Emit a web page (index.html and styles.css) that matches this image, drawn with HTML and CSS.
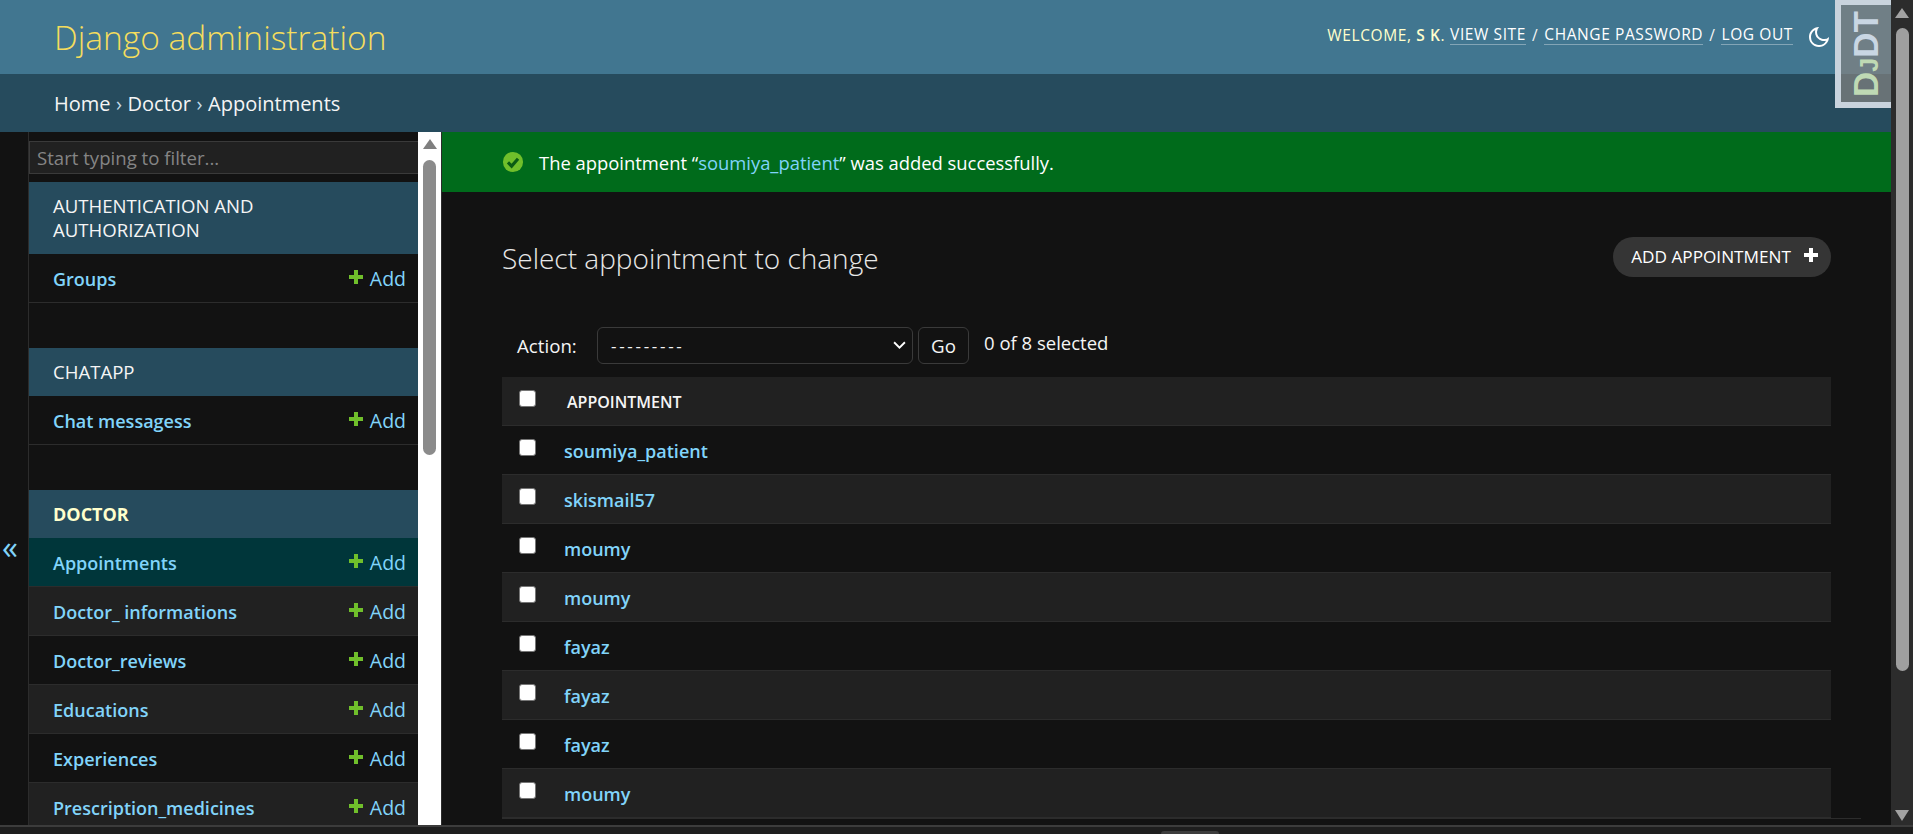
FILE: index.html
```html
<!DOCTYPE html>
<html lang="en">
<head>
<meta charset="utf-8">
<title>Select appointment to change</title>
<link rel="stylesheet" href="styles.css">
</head>
<body>
<div class="window">
  <div class="page">
    <header class="header">
      <h1 class="brand">Django administration</h1>
      <div class="tools">
        <span class="welcome">Welcome, <strong>S K</strong>.</span>
        <a class="tool-link">View site</a><span class="sep">/</span>
        <a class="tool-link">Change password</a><span class="sep">/</span>
        <a class="tool-link">Log out</a>
        <svg class="moon" viewBox="0 0 24 24" width="24" height="24"><path fill="#fff" d="M10 7a7 7 0 0 0 12 4.9v.1c0 5.523-4.477 10-10 10S2 17.523 2 12 6.477 2 12 2h.1A6.98 6.98 0 0 0 10 7zm-6 5a8 8 0 0 0 15.062 3.762A9 9 0 0 1 8.238 4.938 7.999 7.999 0 0 0 4 12z"/></svg>
      </div>
    </header>
    <nav class="crumbs">Home <span class="crumb-sep">›</span> Doctor <span class="crumb-sep">›</span> Appointments</nav>
    <div class="main">
      <div class="toggle">«</div>
      <aside class="sidebar">
        <div class="side-scroll">
          <div class="filter"><input class="filter-input" placeholder="Start typing to filter..."></div>
          <section class="app">
            <div class="caption">Authentication and Authorization</div>
            <div class="model"><a class="model-name">Groups</a><a class="add"><svg class="plus" viewBox="0 0 16 16"><path d="M6 1h4v5h5v4h-5v5H6v-5H1V6h5z"/></svg>Add</a></div>
          </section>
          <section class="app">
            <div class="caption">Chatapp</div>
            <div class="model"><a class="model-name">Chat messagess</a><a class="add"><svg class="plus" viewBox="0 0 16 16"><path d="M6 1h4v5h5v4h-5v5H6v-5H1V6h5z"/></svg>Add</a></div>
          </section>
          <section class="app">
            <div class="caption caption-current">Doctor</div>
            <div class="model model-current"><a class="model-name">Appointments</a><a class="add"><svg class="plus" viewBox="0 0 16 16"><path d="M6 1h4v5h5v4h-5v5H6v-5H1V6h5z"/></svg>Add</a></div>
            <div class="model model-alt"><a class="model-name">Doctor_ informations</a><a class="add"><svg class="plus" viewBox="0 0 16 16"><path d="M6 1h4v5h5v4h-5v5H6v-5H1V6h5z"/></svg>Add</a></div>
            <div class="model"><a class="model-name">Doctor_reviews</a><a class="add"><svg class="plus" viewBox="0 0 16 16"><path d="M6 1h4v5h5v4h-5v5H6v-5H1V6h5z"/></svg>Add</a></div>
            <div class="model model-alt"><a class="model-name">Educations</a><a class="add"><svg class="plus" viewBox="0 0 16 16"><path d="M6 1h4v5h5v4h-5v5H6v-5H1V6h5z"/></svg>Add</a></div>
            <div class="model"><a class="model-name">Experiences</a><a class="add"><svg class="plus" viewBox="0 0 16 16"><path d="M6 1h4v5h5v4h-5v5H6v-5H1V6h5z"/></svg>Add</a></div>
            <div class="model model-alt"><a class="model-name">Prescription_medicines</a><a class="add"><svg class="plus" viewBox="0 0 16 16"><path d="M6 1h4v5h5v4h-5v5H6v-5H1V6h5z"/></svg>Add</a></div>
          </section>
        </div>
        <div class="side-bar">
          <span class="arrow-up arrow-light"></span>
          <span class="side-thumb"></span>
        </div>
      </aside>
      <main class="content">
        <div class="message">
          <svg class="check" viewBox="0 0 24 24" width="22" height="22"><circle cx="12" cy="12" r="11" fill="#70bf2b"/><path d="M6.5 12.5l4 4 7-8" fill="none" stroke="#0a5c14" stroke-width="3.4"/></svg>
          <span>The appointment “<a class="msg-link">soumiya_patient</a>” was added successfully.</span>
        </div>
        <div class="body">
          <div class="title-row">
            <h2 class="title">Select appointment to change</h2>
            <a class="add-btn">Add appointment<svg class="btn-plus" viewBox="0 0 16 16"><path d="M6 1h4v5h5v4h-5v5H6v-5H1V6h5z"/></svg></a>
          </div>
          <div class="actions">
            <span class="action-label">Action:</span>
            <div class="select"><span class="dashes">---------</span><svg class="chev" viewBox="0 0 12 8" width="13" height="9"><path d="M1 1l5 5 5-5" fill="none" stroke="#fff" stroke-width="1.7"/></svg></div>
            <div class="go">Go</div>
            <span class="count">0 of 8 selected</span>
          </div>
          <div class="results">
            <div class="table">
              <div class="row row-head"><span class="cb"></span><span class="head-label">Appointment</span></div>
              <div class="row"><span class="cb"></span><a class="row-link">soumiya_patient</a></div>
              <div class="row row-alt"><span class="cb"></span><a class="row-link">skismail57</a></div>
              <div class="row"><span class="cb"></span><a class="row-link">moumy</a></div>
              <div class="row row-alt"><span class="cb"></span><a class="row-link">moumy</a></div>
              <div class="row"><span class="cb"></span><a class="row-link">fayaz</a></div>
              <div class="row row-alt"><span class="cb"></span><a class="row-link">fayaz</a></div>
              <div class="row"><span class="cb"></span><a class="row-link">fayaz</a></div>
              <div class="row row-alt"><span class="cb"></span><a class="row-link">moumy</a></div>
            </div>
          </div>
        </div>
      </main>
    </div>
    <div class="djdt"><span class="djdt-text"><span class="djdt-d">D</span><span class="djdt-j">J</span>DT</span></div>
  </div>
  <div class="page-bar">
    <span class="arrow-up"></span>
    <span class="page-thumb"></span>
    <span class="arrow-down"></span>
  </div>
</div>
<div class="strip"><span class="strip-tab"></span></div>
</body>
</html>
```
FILE: styles.css
```css
* { box-sizing: border-box; }
html, body { margin: 0; height: 100%; overflow: hidden; }
body {
  display: flex;
  flex-direction: column;
  background: #121212;
  color: #f5f5f5;
  font-family: "Open Sans", "Liberation Sans", sans-serif;
  font-size: 18px;
}
a { color: #81d4fa; text-decoration: none; }
.window { display: flex; height: 825px; overflow: hidden; }
.page { position: relative; flex: 1; min-width: 0; display: flex; flex-direction: column; }
.page-bar { width: 22px; background: #2c2c2c; display: flex; flex-direction: column; align-items: center; padding-top: 8px; }
.arrow-up { width: 0; height: 0; border-left: 7px solid transparent; border-right: 7px solid transparent; border-bottom: 10px solid #a3a3a3; }
.arrow-light { border-bottom-color: #7f7f7f; }
.arrow-down { width: 0; height: 0; border-left: 7px solid transparent; border-right: 7px solid transparent; border-top: 11px solid #a3a3a3; margin-top: 139px; }
.page-thumb { width: 13px; height: 643px; margin-top: 10px; background: #9f9f9f; border-radius: 7px; }

.header { height: 74px; background: #417690; display: flex; justify-content: space-between; padding: 0 60px 0 54px; align-items: center; }
.brand { margin: 0; font-size: 33.5px; font-weight: 300; color: #f5dd5d; }
.tools { display: flex; align-items: center; font-size: 15.5px; letter-spacing: .6px; text-transform: uppercase; color: #ffc; margin-top: -5px; }
.welcome strong { font-weight: 600; }
.welcome { margin-right: 5px; }
.tool-link { color: #fff; border-bottom: 1px solid rgba(255,255,255,.35); line-height: 20px; }
.sep { margin: 0 6px; color: #f5f5f5; }
.moon { margin-left: 14px; margin-top: 4px; }
.crumbs { height: 58px; background: #264b5d; padding-left: 54px; display: flex; align-items: center; gap: 5.5px; font-size: 20px; color: #f5f5f5; }
.crumb-sep { color: #c4dce8; }

.main { flex: 1; min-height: 0; display: flex; }
.toggle { width: 29px; flex: none; border-right: 1px solid #2c2c2c; display: flex; align-items: center; justify-content: center; color: #81d4fa; font-size: 32px; padding: 136px 8px 0 0; }
.sidebar { width: 413px; flex: none; display: flex; border-right: 1px solid #2c2c2c; }
.side-scroll { flex: 1; min-width: 0; overflow: hidden; }
.side-bar { width: 23px; flex: none; background: #fff; display: flex; flex-direction: column; align-items: center; padding-top: 7px; }
.side-thumb { width: 13px; height: 295px; margin-top: 11px; background: #8b8b8b; border-radius: 7px; }
.filter { height: 50px; padding: 9px 0 8px; }
.filter-input { display: block; width: 100%; height: 33px; background: #212121; border: 1px solid #3a3a3a; border-right: 0; color: #fff; padding: 0 7px; font: inherit; font-size: 18.6px; outline: 0; }
.filter-input::placeholder { color: #858585; opacity: 1; }
.app { margin-bottom: 45px; }
.caption { padding: 12px 120px 12px 24px; background: #264b5d; color: #f5f5f5; font-size: 18.6px; line-height: 24px; text-transform: uppercase; }
.caption-current { color: #ffc; font-weight: 700; font-size: 18px; padding: 12px 24px 12px; }
.model { height: 49px; display: flex; align-items: center; justify-content: space-between; padding: 2px 12px 0 24px; border-bottom: 1px solid #2c2c2c; }
.model-alt { background: #212121; }
.model-current { background: #00363a; }
.model-name { font-weight: 600; font-size: 18px; }
.add { display: flex; align-items: center; gap: 6px; font-size: 19.5px; line-height: 24px; margin-top: -1px; }
.plus { width: 16px; height: 16px; fill: #70bf2b; margin-top: -3px; }

.content { flex: 1; min-width: 0; overflow: hidden; }
.message { height: 60px; background: #006b1b; display: flex; align-items: center; gap: 15px; padding-left: 60px; font-size: 18.4px; color: #fff; }
.msg-link { color: #81d4fa; }
.check { flex: none; margin-top: -1px; }
.body { padding: 0 30px 0 60px; }
.title-row { height: 121px; margin-right: 30px; display: flex; align-items: flex-start; justify-content: space-between; padding-top: 45px; }
.title { margin: 2px 0 0; font-size: 28px; font-weight: 300; color: #e8e8e8; line-height: 38px; }
.add-btn { height: 40px; border-radius: 20px; background: #353535; color: #fff; display: flex; align-items: center; padding: 0 12px 2px 18px; text-transform: uppercase; font-size: 17.2px; gap: 12px; }
.btn-plus { width: 16px; height: 16px; fill: #fff; margin-top: -2px; }
.actions { height: 64px; display: flex; align-items: center; padding-left: 15px; font-size: 18.7px; }
.action-label { width: 80px; }
.select { width: 316px; height: 37px; border: 1px solid #3a3a3a; border-radius: 6px; display: flex; align-items: center; justify-content: space-between; padding: 0 6px 0 13px; font-size: 17px; }
.dashes { letter-spacing: 2.7px; }
.go { margin-left: 5px; width: 51px; height: 37px; border: 1px solid #3a3a3a; border-radius: 6px; display: flex; align-items: center; justify-content: center; }
.count { margin-left: 15px; margin-top: -6px; font-size: 18.5px; }
.results { border-bottom: 1px solid #2c2c2c; }
.table { margin-right: 30px; display: flex; flex-direction: column; }
.row { height: 49px; flex: none; display: flex; align-items: center; padding-left: 17px; border-bottom: 1px solid #2c2c2c; }
.row-alt, .row-head { background: #212121; }
.cb { flex: none; width: 17px; height: 17px; background: #fff; border: 1px solid #767676; border-radius: 3px; margin-top: -6px; }
.row-link { margin: 2px 0 0 28px; font-weight: 600; font-size: 18px; }
.head-label { margin: 2px 0 0 31px; font-size: 16px; font-weight: 600; text-transform: uppercase; }

.djdt { position: absolute; top: 0; right: 0; width: 56px; height: 108px; background: rgba(132,131,130,.7); border: 6px solid #c9d3dd; border-right: 0; border-top-width: 5px; overflow: hidden; }
.djdt-text { position: absolute; left: 50%; top: 50%; transform: translate(-50%, -50%) rotate(-90deg); font: 700 35px "Liberation Sans", sans-serif; color: #c9d6e3; white-space: nowrap; }
.djdt-d { color: #bfd9b4; }
.djdt-j { color: #bfd9b4; font-size: 25px; }
.strip { height: 9px; background: #1e1e1e; border-top: 2px solid #3c3c3c; display: flex; padding-left: 1161px; }
.strip-tab { width: 58px; height: 3px; background: #3c3c3c; margin-top: 4px; border-radius: 3px 3px 0 0; }
```
